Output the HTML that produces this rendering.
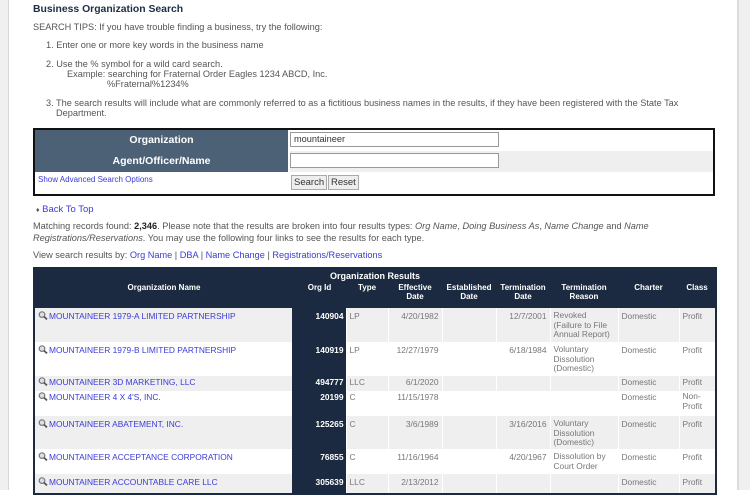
<!DOCTYPE html>
<html><head><style>
*{margin:0;padding:0;box-sizing:border-box}
body{width:750px;height:490px;overflow:hidden;background:#fff;font-family:"Liberation Sans",Arial,sans-serif;color:#555;font-size:9.2px;position:relative}
.lg{position:absolute;left:0;top:0;width:9px;height:490px;background:#f0f0f0;border-right:1px solid #d8d8dc}
.rg{position:absolute;left:737px;top:0;width:13px;height:490px;background:#f0f0f0;border-left:2px solid #dcdce0}
.a{position:absolute;white-space:nowrap}
a{color:#3b3bd6;text-decoration:none}
h1{font-size:10.4px;color:#1c2e44;font-weight:bold}
.sb{position:absolute;left:33px;top:128px;width:682px;height:68px;border:2px solid #111;}
.sb .hd{position:absolute;left:0;top:0;width:253px;height:42px;background:#4d6176;color:#fff;font-weight:bold;font-size:10.5px;text-align:center}
.inp{position:absolute;height:15px;border:1px solid #999;background:#fff;font-size:9.2px;padding:1px 3px;color:#333}
.btn{position:absolute;height:15px;border:1px solid #aaa;background:#eee;font-size:9.5px;padding:1px 2px;color:#333}
table{position:absolute;left:33px;top:267px;width:682px;border-collapse:collapse;table-layout:fixed;border:2px solid #1b2a40;font-size:8.4px}
th{background:#1b2a40;color:#fff;font-weight:bold;font-size:8px;vertical-align:top;line-height:9px;padding:0 2px}
td{vertical-align:top;padding:3px 3px 0;line-height:11px;color:#777;border-right:1px solid #fff;overflow:hidden}
tr.g td{background:#efefef}
tr td.id,tr.g td.id{background:#1b2a40;color:#fff;font-weight:bold;text-align:right;padding-right:2px}
td.n{border-right:2px solid #1b2a40;white-space:nowrap}
td.r{text-align:right}
td.w{line-height:9.5px}
.mg{display:inline-block;width:10px;height:9px;vertical-align:-1px;margin-right:1px}
</style></head><body>
<div class="lg"></div><div class="rg"></div>
<svg width="0" height="0" style="position:absolute"><defs><symbol id="m" viewBox="0 0 10 9"><circle cx="4" cy="3.6" r="2.8" fill="#dde" stroke="#777" stroke-width="1.2"/><path d="M6 5.6L9 8.4" stroke="#555" stroke-width="1.8"/></symbol></defs></svg>
<h1 class="a" style="left:33px;top:4px">Business Organization Search</h1>
<div class="a" style="left:33px;top:22px">SEARCH TIPS: If you have trouble finding a business, try the following:</div>
<div class="a" style="left:46px;top:40px">1. Enter one or more key words in the business name</div>
<div class="a" style="left:46px;top:59px">2. Use the % symbol for a wild card search.</div>
<div class="a" style="left:67px;top:69px">Example: searching for Fraternal Order Eagles 1234 ABCD, Inc.</div>
<div class="a" style="left:107px;top:79px">%Fraternal%1234%</div>
<div class="a" style="left:46px;top:98px">3. The search results will include what are commonly referred to as a fictitious business names in the results, if they have been registered with the State Tax</div>
<div class="a" style="left:56px;top:108px">Department.</div>
<div class="sb">
 <div class="hd"><div style="position:absolute;left:0;width:253px;top:4px">Organization</div><div style="position:absolute;left:0;width:253px;top:25px">Agent/Officer/Name</div></div>
 <div style="position:absolute;left:253px;top:0;width:2px;height:42px;background:#fff"></div>
 <div style="position:absolute;left:255px;top:21px;width:423px;height:21px;background:#efefef"></div>
 <div class="inp" style="left:255px;top:2px;width:209px">mountaineer</div>
 <div class="inp" style="left:255px;top:23px;width:209px"></div>
 <div class="a" style="left:3px;top:45px;font-size:8px"><a>Show Advanced Search Options</a></div>
 <div class="btn" style="left:256px;top:45px">Search</div>
 <div class="btn" style="left:293px;top:45px">Reset</div>
</div>
<div class="a" style="left:36px;top:204px"><span style="font-size:7px">&#9830;</span> <a style="font-size:9.5px">Back To Top</a></div>
<div class="a" style="left:33px;top:221px">Matching records found: <b style="color:#222">2,346</b>. Please note that the results are broken into four results types: <i>Org Name</i>, <i>Doing Business As</i>, <i>Name Change</i> and <i>Name</i></div>
<div class="a" style="left:33px;top:233px"><i>Registrations/Reservations</i>. You may use the following four links to see the results for each type.</div>
<div class="a" style="left:33px;top:250px">View search results by: <a>Org Name</a> | <a>DBA</a> | <a>Name Change</a> | <a>Registrations/Reservations</a></div>
<table>
<colgroup><col style="width:259px"><col style="width:53px"><col style="width:42px"><col style="width:54px"><col style="width:54px"><col style="width:54px"><col style="width:68px"><col style="width:61px"><col style="width:37px"></colgroup>
<tr style="height:15px"><th colspan="9" style="font-size:9px;padding-top:3px;text-align:center">Organization Results</th></tr>
<tr style="height:25px"><th>Organization Name</th><th>Org Id</th><th>Type</th><th>Effective Date</th><th>Established Date</th><th>Termination Date</th><th>Termination Reason</th><th>Charter</th><th>Class</th></tr>
<tr class="g" style="height:34px"><td class="n"><svg class="mg"><use href="#m"/></svg><a>MOUNTAINEER 1979-A LIMITED PARTNERSHIP</a></td><td class="id">140904</td><td>LP</td><td class="r">4/20/1982</td><td></td><td class="r">12/7/2001</td><td class="w">Revoked (Failure to File Annual Report)</td><td>Domestic</td><td>Profit</td></tr>
<tr style="height:34px"><td class="n"><svg class="mg"><use href="#m"/></svg><a>MOUNTAINEER 1979-B LIMITED PARTNERSHIP</a></td><td class="id">140919</td><td>LP</td><td class="r">12/27/1979</td><td></td><td class="r">6/18/1984</td><td class="w">Voluntary Dissolution (Domestic)</td><td>Domestic</td><td>Profit</td></tr>
<tr class="g" style="height:15px"><td class="n" style="padding-top:1px"><svg class="mg"><use href="#m"/></svg><a>MOUNTAINEER 3D MARKETING, LLC</a></td><td class="id" style="padding-top:1px">494777</td><td style="padding-top:1px">LLC</td><td class="r" style="padding-top:1px">6/1/2020</td><td></td><td></td><td></td><td style="padding-top:1px">Domestic</td><td style="padding-top:1px">Profit</td></tr>
<tr style="height:25px"><td class="n" style="padding-top:1px"><svg class="mg"><use href="#m"/></svg><a>MOUNTAINEER 4 X 4'S, INC.</a></td><td class="id" style="padding-top:1px">20199</td><td style="padding-top:1px">C</td><td class="r" style="padding-top:1px">11/15/1978</td><td></td><td></td><td></td><td style="padding-top:1px">Domestic</td><td class="w" style="padding-top:1px">Non-Profit</td></tr>
<tr class="g" style="height:33px"><td class="n"><svg class="mg"><use href="#m"/></svg><a>MOUNTAINEER ABATEMENT, INC.</a></td><td class="id">125265</td><td>C</td><td class="r">3/6/1989</td><td></td><td class="r">3/16/2016</td><td class="w">Voluntary Dissolution (Domestic)</td><td>Domestic</td><td>Profit</td></tr>
<tr style="height:25px"><td class="n"><svg class="mg"><use href="#m"/></svg><a>MOUNTAINEER ACCEPTANCE CORPORATION</a></td><td class="id">76855</td><td>C</td><td class="r">11/16/1964</td><td></td><td class="r">4/20/1967</td><td class="w">Dissolution by Court Order</td><td>Domestic</td><td>Profit</td></tr>
<tr class="g" style="height:20px"><td class="n"><svg class="mg"><use href="#m"/></svg><a>MOUNTAINEER ACCOUNTABLE CARE LLC</a></td><td class="id">305639</td><td>LLC</td><td class="r">2/13/2012</td><td></td><td></td><td></td><td>Domestic</td><td>Profit</td></tr>
</table>
</body></html>
